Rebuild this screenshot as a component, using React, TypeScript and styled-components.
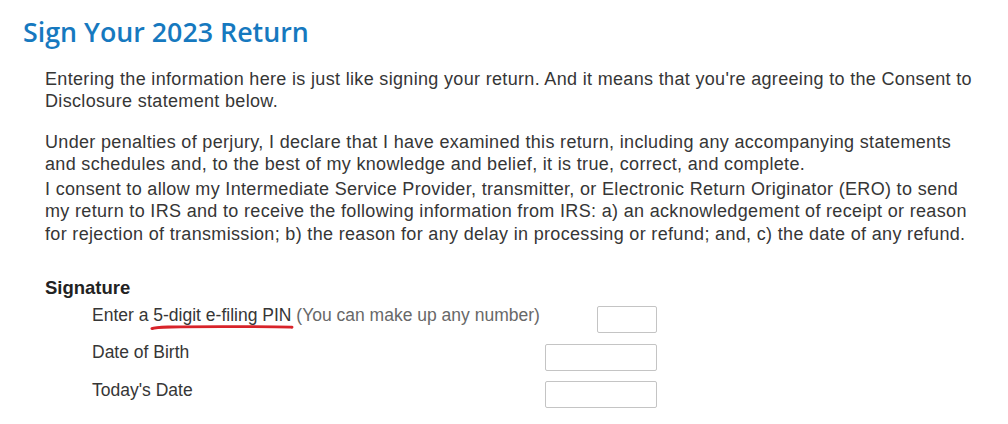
import React from "react";
import styled, { createGlobalStyle } from "styled-components";

const Global = createGlobalStyle`
  html, body { margin: 0; padding: 0; background: #ffffff; }
  body { font-family: "Liberation Sans", Arial, sans-serif; }
`;

const Page = styled.div`
  width: 1008px;
  height: 424px;
  box-sizing: border-box;
  padding: 17px 0 0 23px;
  background: #fff;
`;

const Title = styled.h1`
  margin: 0;
  font-family: "Open Sans", "Noto Sans", sans-serif;
  font-weight: 600;
  font-size: 26.8px;
  line-height: 30px;
  color: #1679bf;
`;

const Body = styled.div`
  padding: 21px 0 0 22px;
  width: 934px;
  color: #363636;
  font-size: 17.5px;
  line-height: 22.3px;
`;

const Para = styled.p<{ $gap: number }>`
  margin: 0 0 ${(p) => p.$gap}px 0;
  font-size: 18px;
  letter-spacing: 0.33px;
`;

const Section = styled.section`
  margin-top: 32px;
  width: 612px;
`;

const Heading = styled.div`
  font-weight: 700;
  font-size: 18.5px;
  color: #222;
  line-height: 22px;
  margin-bottom: 2px;
`;

const Row = styled.div`
  display: flex;
  align-items: center;
  justify-content: space-between;
  padding-left: 47px;
  height: 37.5px;
`;

const Label = styled.span`
  color: #363636;
  margin-top: -10px;
`;

const Note = styled.span`
  color: #686868;
`;

const Mark = styled.span`
  position: relative;
`;

const Underline = styled.svg`
  position: absolute;
  left: -2px;
  top: 19.5px;
  overflow: visible;
`;

const Box = styled.div<{ $w: number }>`
  width: ${(p) => p.$w}px;
  height: 27px;
  box-sizing: border-box;
  border: 1px solid #c4c4c4;
  border-radius: 2px;
  background: #fff;
`;

export default function App() {
  return (
    <>
      <Global />
      <Page>
        <Title>Sign Your 2023 Return</Title>
        <Body>
          <Para $gap={18}>
            Entering the information here is just like signing your return. And it means that you're agreeing to the
            Consent to Disclosure statement below.
          </Para>
          <Para $gap={3}>
            Under penalties of perjury, I declare that I have examined this return, including any accompanying
            statements and schedules and, to the best of my knowledge and belief, it is true, correct, and complete.
          </Para>
          <Para $gap={0}>
            I consent to allow my Intermediate Service Provider, transmitter, or Electronic Return Originator (ERO) to
            send my return to IRS and to receive the following information from IRS: a) an acknowledgement of receipt
            or reason for rejection of transmission; b) the reason for any delay in processing or refund; and, c) the
            date of any refund.
          </Para>
          <Section>
            <Heading>Signature</Heading>
            <Row>
              <Label>
                Enter a{" "}
                <Mark>
                  5-digit e-filing PIN
                  <Underline width="142" height="6" viewBox="0 0 142 6">
                    <path
                      d="M1 4.6 C 4 3, 18 2.6, 70 2.6 S 136 2.6, 141 3.2"
                      fill="none"
                      stroke="#d8232a"
                      strokeWidth="2.9"
                      strokeLinecap="round"
                    />
                  </Underline>
                </Mark>{" "}
                <Note>(You can make up any number)</Note>
              </Label>
              <Box $w={60} />
            </Row>
            <Row>
              <Label>Date of Birth</Label>
              <Box $w={112} />
            </Row>
            <Row>
              <Label>Today's Date</Label>
              <Box $w={112} />
            </Row>
          </Section>
        </Body>
      </Page>
    </>
  );
}
